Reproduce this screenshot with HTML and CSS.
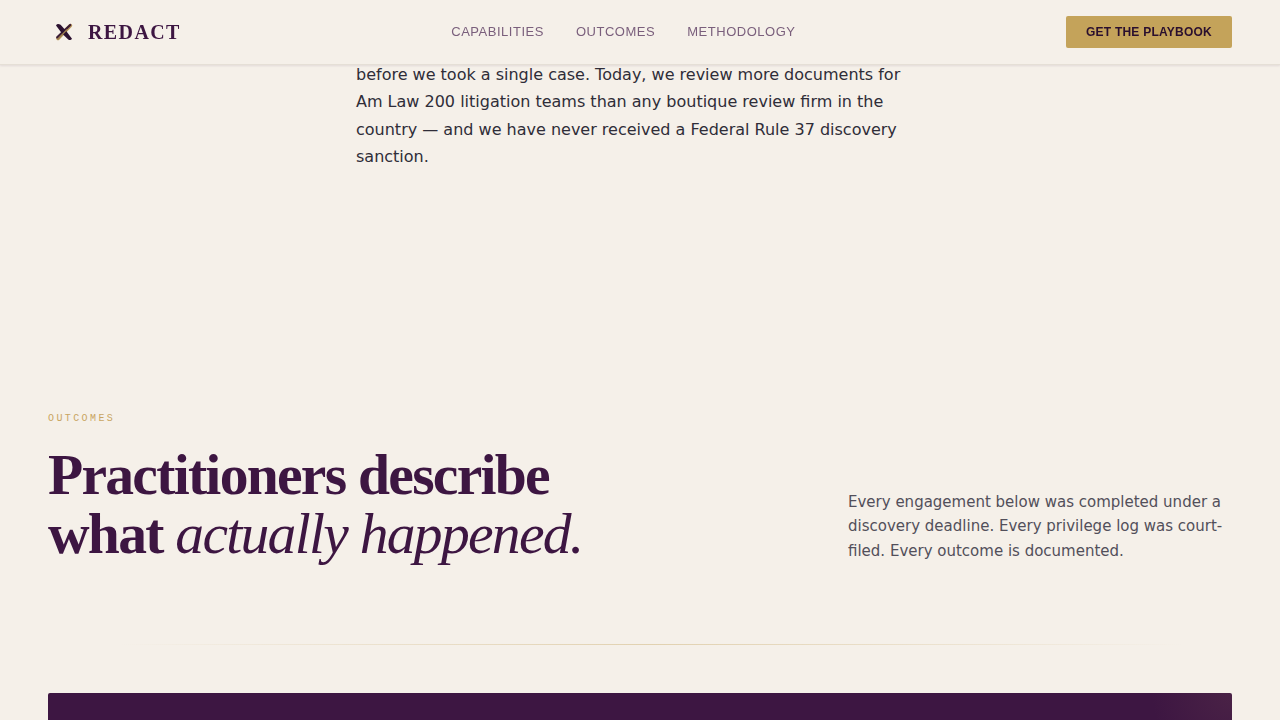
FILE: index.html
```html
<!DOCTYPE html>
<html lang="en">
<head>
  <meta charset="UTF-8" />
  <meta name="viewport" content="width=device-width, initial-scale=1.0"/>
  <title>Redact</title>
  <link rel="stylesheet" href="styles.css">
</head>
<body>

  <!-- Header -->
  <header class="site-header">
    <a class="brand" href="#">
      <svg class="brand-mark" viewBox="0 0 32 32" aria-hidden="true">
        <path d="M22.4 9.6 L10 22.4" stroke="#b8985a" stroke-width="3.6" stroke-linecap="round"/>
        <path d="M22.2 9 L9.2 21.4" stroke="#3b1c35" stroke-width="2.2" stroke-linecap="round"/>
        <path d="M8 9.4 Q9.4 7 12.6 8.8 L17.8 14.6 L24 22.8 Q22.6 25 20.2 23.4 L14 17.6 Z" fill="#2c1230"/>
        <path d="M10 23 L18.6 14" stroke="#9c7d4e" stroke-width="1.2" stroke-linecap="round"/>
      </svg>
      <span>REDACT</span>
    </a>
    <nav class="site-nav">
      <a href="#capabilities">Capabilities</a>
      <a href="#outcomes">Outcomes</a>
      <a href="#methodology">Methodology</a>
    </nav>
    <button class="header-btn" type="button">Get the Playbook</button>
  </header>

  <main>
    <section class="intro">
      <p>before we took a single case. Today, we review more documents for Am Law 200 litigation teams than any boutique review firm in the country — and we have never received a Federal Rule 37 discovery sanction.</p>
    </section>

    <!-- Outcomes -->
    <section class="outcomes" id="outcomes">
      <p class="eyebrow">Outcomes</p>
      <div class="outcomes-head">
        <h2>Practitioners describe<br>what <em>actually happened.</em></h2>
        <p class="outcomes-note">Every engagement below was completed under a discovery deadline. Every privilege log was court-filed. Every outcome is documented.</p>
      </div>
      <hr class="divider">
      <div class="case-card"></div>
    </section>
  </main>

</body>
</html>
```

FILE: styles.css
```css
* {
  box-sizing: border-box;
}

body {
  margin: 0;
  background-color: #f5f0e9;
  color: #2f2d38;
  font-family: 'DejaVu Sans', sans-serif;
  overflow-x: hidden;
}

.site-header {
  position: fixed;
  top: 0;
  left: 0;
  right: 0;
  z-index: 10;
  display: flex;
  align-items: center;
  justify-content: space-between;
  padding: 16px 48px;
  background-color: #f5f0e9;
  border-bottom: 1px solid #e5dfd6;
  box-shadow: 0 1px 2px rgba(61, 22, 66, 0.1);
}

.brand {
  display: flex;
  align-items: center;
  gap: 8px;
  color: #3d1642;
  font-family: 'Liberation Serif', serif;
  font-size: 20px;
  font-weight: bold;
  line-height: 32px;
  letter-spacing: 0.07em;
  text-decoration: none;
}

.brand-mark {
  width: 32px;
  height: 32px;
}

.site-nav {
  display: flex;
  gap: 32px;
  padding-bottom: 2px;
}

.site-nav a {
  color: #7a5f7c;
  font-family: 'Liberation Sans', sans-serif;
  font-size: 13px;
  letter-spacing: 0.04em;
  text-decoration: none;
  text-transform: uppercase;
}

.header-btn {
  height: 32px;
  padding: 0 20px;
  border: none;
  border-radius: 2px;
  background-color: #c4a35a;
  color: #2a0f2e;
  font-family: 'Liberation Sans', sans-serif;
  font-size: 12px;
  font-weight: bold;
  letter-spacing: 0.02em;
  text-transform: uppercase;
  cursor: pointer;
}

.intro {
  max-width: 568px;
  margin: 0 auto;
  padding: 61px 0 120px;
}

.intro p {
  margin: 0;
  font-size: 16px;
  line-height: 1.71;
}

.outcomes {
  padding: 120px 48px 0;
}

.eyebrow {
  margin: 0 0 18px;
  color: #c9a562;
  font-family: 'Liberation Mono', monospace;
  font-size: 10px;
  line-height: 18px;
  letter-spacing: 0.24em;
  text-transform: uppercase;
}

.outcomes-head {
  display: grid;
  grid-template-columns: 2fr 1fr;
  gap: 32px;
  align-items: end;
}

.outcomes-head h2 {
  margin: 0;
  color: #3d1642;
  font-family: 'Liberation Serif', serif;
  font-size: clamp(36px, 4.5vw, 72px);
  font-weight: bold;
  line-height: 1.02;
  letter-spacing: -0.03em;
}

.outcomes-head em {
  font-weight: normal;
}

.outcomes-note {
  margin: 0;
  color: #524f5a;
  font-size: 15px;
  line-height: 1.65;
}

.divider {
  height: 1px;
  margin: 80px 0 48px;
  border: none;
  background: linear-gradient(90deg, transparent 6%, rgba(196, 163, 90, 0.4), transparent 96%);
}

.case-card {
  min-height: 320px;
  border-radius: 2px;
  background: radial-gradient(circle at 100% 0, #4a2246, #3d1642 80px);
}
```
